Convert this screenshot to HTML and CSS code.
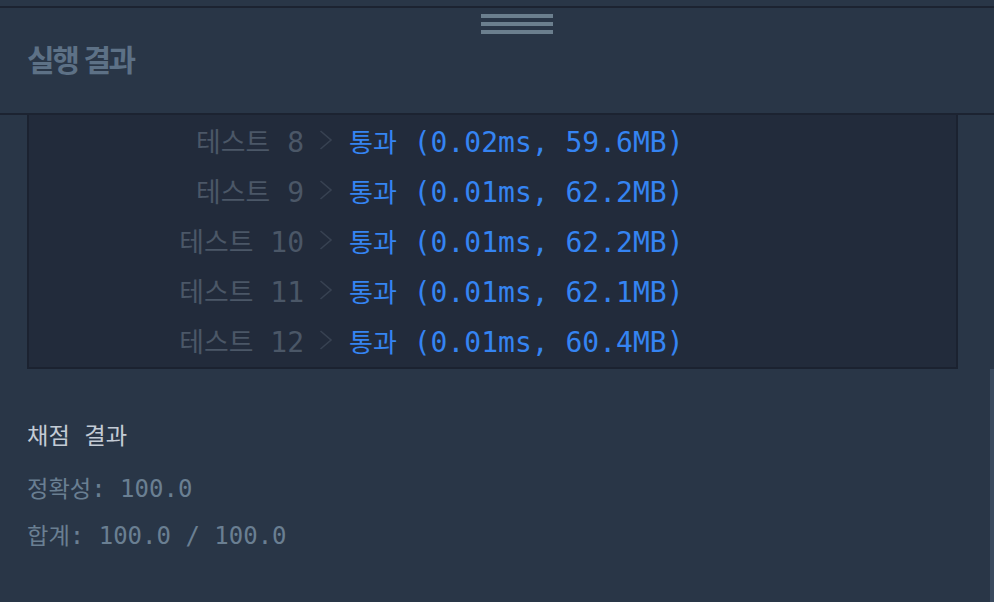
FILE: index.html
```html
<!DOCTYPE html>
<html lang="ko">
<head>
<meta charset="utf-8">
<title>실행 결과</title>
<link rel="stylesheet" href="styles.css">
</head>
<body>
<div class="page">
  <div class="top-strip"></div>
  <header class="header">
    <div class="handle"><span class="bar"></span><span class="bar"></span><span class="bar"></span></div>
    <h2 class="title">실행 결과</h2>
  </header>
  <section class="results">
    <div class="row">
      <span class="label"><span class="ko">테스트</span> 8</span>
      <svg class="chev" width="14" height="22" viewBox="0 0 14 22"><polyline points="1.5,2 12,11 1.5,20" fill="none" stroke="#384252" stroke-width="1.6"/></svg>
      <span class="pass"><span class="ko">통과</span> (0.02ms, 59.6MB)</span>
    </div>
    <div class="row">
      <span class="label"><span class="ko">테스트</span> 9</span>
      <svg class="chev" width="14" height="22" viewBox="0 0 14 22"><polyline points="1.5,2 12,11 1.5,20" fill="none" stroke="#384252" stroke-width="1.6"/></svg>
      <span class="pass"><span class="ko">통과</span> (0.01ms, 62.2MB)</span>
    </div>
    <div class="row">
      <span class="label"><span class="ko">테스트</span> 10</span>
      <svg class="chev" width="14" height="22" viewBox="0 0 14 22"><polyline points="1.5,2 12,11 1.5,20" fill="none" stroke="#384252" stroke-width="1.6"/></svg>
      <span class="pass"><span class="ko">통과</span> (0.01ms, 62.2MB)</span>
    </div>
    <div class="row">
      <span class="label"><span class="ko">테스트</span> 11</span>
      <svg class="chev" width="14" height="22" viewBox="0 0 14 22"><polyline points="1.5,2 12,11 1.5,20" fill="none" stroke="#384252" stroke-width="1.6"/></svg>
      <span class="pass"><span class="ko">통과</span> (0.01ms, 62.1MB)</span>
    </div>
    <div class="row">
      <span class="label"><span class="ko">테스트</span> 12</span>
      <svg class="chev" width="14" height="22" viewBox="0 0 14 22"><polyline points="1.5,2 12,11 1.5,20" fill="none" stroke="#384252" stroke-width="1.6"/></svg>
      <span class="pass"><span class="ko">통과</span> (0.01ms, 60.4MB)</span>
    </div>
  </section>
  <section class="score">
    <h3 class="score-title"><span class="ko">채점</span> <span class="ko">결과</span></h3>
    <p class="score-line"><span class="ko">정확성</span>: 100.0</p>
    <p class="score-line"><span class="ko">합계</span>: 100.0 / 100.0</p>
  </section>
  <div class="scroll-thumb"></div>
</div>
</body>
</html>
```
FILE: styles.css
```css
html, body {
  margin: 0;
  padding: 0;
}
body {
  background: #293647;
  width: 994px;
  height: 602px;
  overflow: hidden;
}
.page {
  position: relative;
  height: 602px;
  font-family: "DejaVu Sans Mono", "Noto Sans CJK KR", monospace;
}
.top-strip {
  height: 6px;
  border-bottom: 2px solid #1c2331;
}
.header {
  height: 105px;
  border-bottom: 2px solid #1c2331;
  display: flex;
  flex-direction: column;
}
.handle {
  display: flex;
  flex-direction: column;
  align-items: center;
  gap: 4px;
  padding-top: 6px;
  padding-left: 40px;
}
.bar {
  display: block;
  width: 72px;
  height: 4px;
  background: #6b7f8e;
}
.title {
  margin: 9px 0 0 0;
  padding-left: 27px;
  font-family: "Noto Sans CJK KR", sans-serif;
  font-weight: 700;
  font-size: 30px;
  line-height: 30px;
  letter-spacing: -2.4px;
  color: #5d7186;
}
.results {
  margin: 0 36px 0 27px;
  padding-bottom: 2px;
  background: #222b3b;
  border: 2px solid #1b2230;
  border-top: none;
}
.row {
  display: flex;
  align-items: center;
  height: 50px;
  font-size: 28px;
}
.label,
.pass {
  white-space: pre;
}
.ko {
  font-family: "Noto Sans CJK KR", sans-serif;
  font-size: 0.93em;
}
.label .ko {
  font-size: 0.96em;
}
.label {
  width: 275px;
  text-align: right;
  color: #4b5767;
}
.chev {
  margin-left: 15px;
  margin-right: 16px;
}
.pass {
  color: #3584f2;
}
.score {
  padding: 49px 0 0 27px;
  font-size: 24px;
}
.score-title {
  margin: 0;
  font-weight: 400;
  font-size: 24px;
  line-height: 32px;
  color: #c3cbd5;
  white-space: pre;
}
.score-title .ko,
.score-line .ko {
  font-size: 0.97em;
}
.score-line {
  margin: 0;
  line-height: 45px;
  color: #6a7f92;
  white-space: pre;
}
.score-title + .score-line {
  margin-top: 13px;
}
.scroll-thumb {
  position: absolute;
  right: 0;
  top: 369px;
  width: 4px;
  height: 233px;
  background: #3a4a5e;
}
```
